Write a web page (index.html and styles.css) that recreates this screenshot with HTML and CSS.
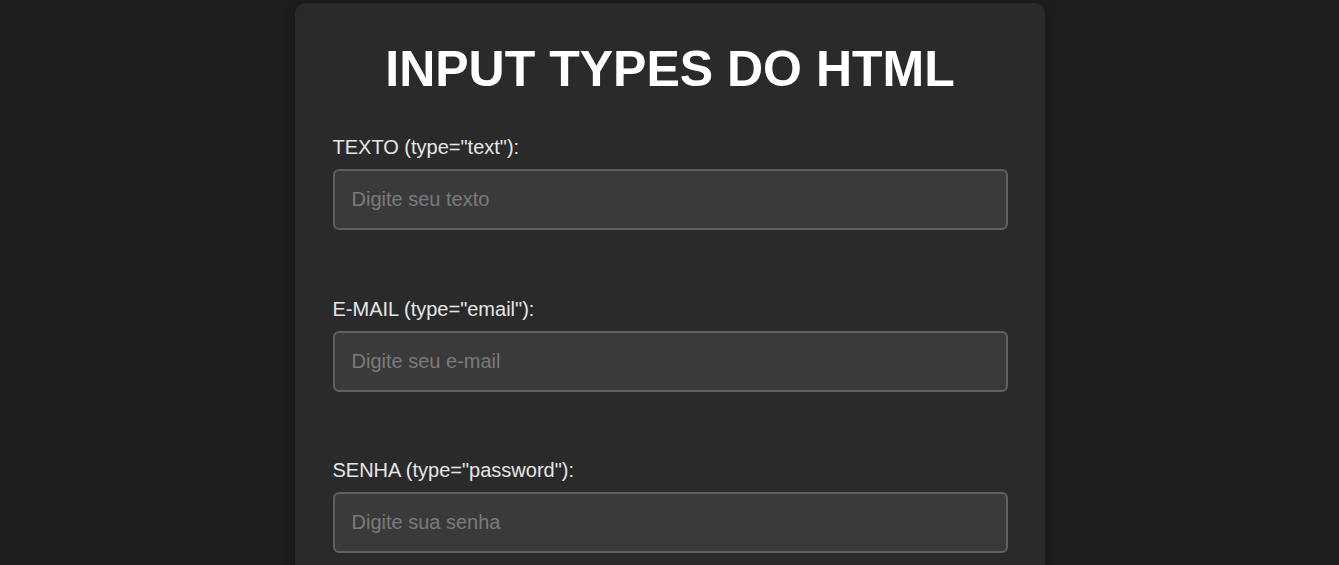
FILE: index.html
```html
<!DOCTYPE html>
<html lang="pt-BR">
<head>
<meta charset="UTF-8">
<title>Input Types do HTML</title>
<link rel="stylesheet" href="styles.css">
</head>
<body>
<main class="card">
  <h1 class="title">INPUT TYPES DO HTML</h1>
  <form class="form">
    <div class="field">
      <label class="label" for="texto">TEXTO (type="text"):</label>
      <input class="input" id="texto" type="text" placeholder="Digite seu texto">
    </div>
    <div class="field">
      <label class="label" for="email">E-MAIL (type="email"):</label>
      <input class="input" id="email" type="email" placeholder="Digite seu e-mail">
    </div>
    <div class="field">
      <label class="label" for="senha">SENHA (type="password"):</label>
      <input class="input" id="senha" type="password" placeholder="Digite sua senha">
    </div>
  </form>
</main>
</body>
</html>
```

FILE: styles.css
```css
* { box-sizing: border-box; }
html, body { margin: 0; }
body {
  background: #1e1e1e;
  font-family: "Liberation Sans", Arial, sans-serif;
  color: #e0e0e0;
  padding-top: 3px;
}
.card {
  width: 750px;
  margin: 0 auto;
  background: #2a2a2a;
  border-radius: 10px;
  padding: 38px 37px 40px 38px;
  box-shadow: 0 0 12px rgba(0,0,0,0.25);
}
.title {
  margin: 0 0 38px;
  text-align: center;
  color: #ffffff;
  font-size: 50px;
  font-weight: bold;
  line-height: 57px;
}
.form {
  display: flex;
  flex-direction: column;
  gap: 67.5px;
}
.field {
  display: flex;
  flex-direction: column;
}
.label {
  font-size: 20px;
  line-height: 23px;
  margin-bottom: 10px;
  color: #e6e6e6;
}
.input {
  width: 675px;
  height: 61px;
  padding: 0 17px;
  font-family: "Liberation Sans", Arial, sans-serif;
  font-size: 20px;
  color: #e0e0e0;
  background: #3a3a3a;
  border: 2px solid #606060;
  border-radius: 6px;
  outline: none;
}
.input::placeholder { color: #7a7a7a; }
```
